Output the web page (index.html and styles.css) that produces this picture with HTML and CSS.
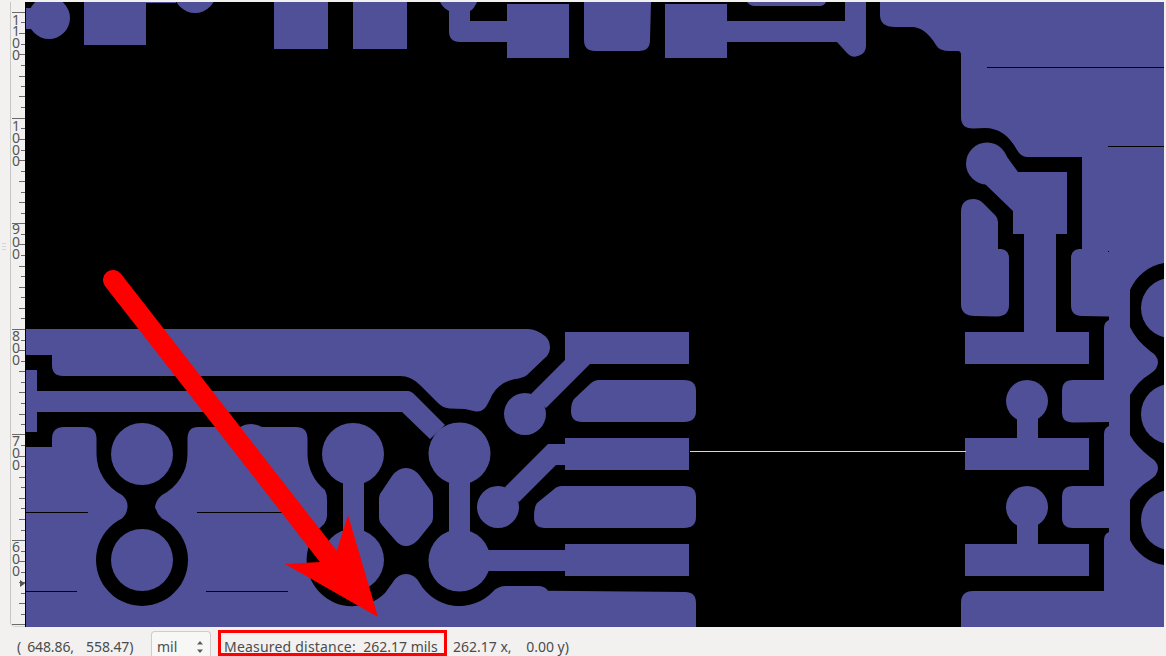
FILE: index.html
```html
<!DOCTYPE html>
<html lang="en">
<head>
<meta charset="utf-8">
<title>Gerber viewer</title>
<link rel="stylesheet" href="styles.css">
</head>
<body>
<div class="app">
  <div class="workspace">
    <div class="handle-strip"><span class="grip"></span></div>
    <div class="ruler">
      <svg class="ruler-svg" width="14" height="625" viewBox="11 2 14 625">
        <path class="ticks" d="M12 12.5h13M21 22.5h4M19 33.5h6M21 44.5h4M19 54.5h6M21 65.5h4M19 76.5h6M21 86.5h4M19 96.5h6M21 107.5h4M12 118.5h13M21 128.5h4M19 139.5h6M21 150.5h4M19 160.5h6M21 171.5h4M19 181.5h6M21 192.5h4M19 202.5h6M21 213.5h4M12 223.5h13M21 234.5h4M19 244.5h6M21 255.5h4M19 266.5h6M21 276.5h4M19 287.5h6M21 297.5h4M19 308.5h6M21 318.5h4M12 329.5h13M21 340.5h4M19 350.5h6M21 361.5h4M19 371.5h6M21 382.5h4M19 392.5h6M21 403.5h4M19 414.5h6M21 424.5h4M12 434.5h13M21 445.5h4M19 456.5h6M21 466.5h4M19 477.5h6M21 487.5h4M19 498.5h6M21 508.5h4M19 519.5h6M21 530.5h4M12 540.5h13M21 551.5h4M19 561.5h6M21 572.5h4M19 582.5h6M21 593.5h4M19 603.5h6M21 614.5h4M12 624.5h13"/>
        <text class="ruler-label" x="12 12 12 12" y="25 36 48 60">1100</text>
        <text class="ruler-label" x="12 12 12 12" y="131 143 155 166">1000</text>
        <text class="ruler-label" x="12 12 12" y="234 247 259">900</text>
        <text class="ruler-label" x="12 12 12" y="341 353 365">800</text>
        <text class="ruler-label" x="12 12 12" y="446 458 470">700</text>
        <text class="ruler-label" x="12 12 12" y="552 564 576">600</text>
        <path class="ruler-mark" d="M20 580l5 3.500-5 3.500z"/>
      </svg>
    </div>
    <svg class="board" width="1139" height="625" viewBox="25 2 1139 625">
      <g class="copper">
        <!-- top row -->
        <circle cx="49" cy="18" r="21"/>
        <rect x="26" y="8" width="8" height="21"/>
        <rect x="84" y="2" width="62" height="43"/>
        <rect x="146" y="2" width="30" height="1"/>
        <circle cx="195" cy="-8" r="21"/>
        <rect x="274" y="2" width="54" height="47"/>
        <rect x="353" y="2" width="54" height="47"/>
        <path d="M440 2H477Q474 9 470 11V21H507V4H569V58H507V42H460Q449 42 449 31V11Q443 8 440 2Z"/>
        <path d="M584 2H651L650 40Q650 51 639 51H595Q584 51 584 40Z"/>
        <path d="M665 4H727V21H845V2H866V45A11 11 0 0 1 847 53L837 42H727V58H665Z"/>
        <path d="M747 2H826Q824 6 820 6H755Q750 6 747 2Z"/>

        <!-- left planes -->
        <path d="M26 329H528Q536 329 545 336Q550 340 550 348Q550 352 547 356L527 375Q523 378 515 379Q500 382 492 395Q488 404 485 408Q481 412 476 411.500Q470 410 465 409L450 408.500Q443 408 438 403L420 385Q411 376 400 376H63Q52 376 52 365V355H26Z"/>
        <path d="M26 370H37V391H408Q411 391 415 395L445 425L430 439L402 412H37V432H26Z"/>
        <path d="M26 447H52V439Q52 427 64 427H85Q96 427 96.500 438V454A46 46 0 0 0 122 495Q128 500 127.500 507Q127 514 122 518.500A46 46 0 1 0 162 518.500Q157 514 155 507Q156 500 162 495A46 46 0 0 0 187.500 454V438Q188 427 198 427H240Q250 421 262 427H296Q307 427 307.500 438V454A46 46 0 0 0 325 490Q327 494 327 500V515Q327 522 322 526A46 46 0 1 0 385 593L393 582Q398 574 406 574Q414 574 419 582A46 46 0 0 0 493 591.500Q498 586 506 586H538Q545 586 548 590.700L685 592Q696 592 696 603V627H26Z"/>

        <!-- vias on left plane -->
        <circle cx="142" cy="454" r="31"/>
        <circle cx="142" cy="560" r="31"/>
        <circle cx="353" cy="454" r="31"/>
        <circle cx="353" cy="560" r="31"/>
        <rect x="343" y="454" width="21" height="106"/>
        <circle cx="459.500" cy="453.500" r="31"/>
        <circle cx="459.500" cy="560.500" r="31"/>
        <rect x="449" y="454" width="21" height="106"/>
        <rect x="470" y="550" width="95" height="21"/>
        <path d="M406 468Q414 468 420 476L431 491Q433 494 433 498V518Q433 522 430 525L418 540Q412 546 406 546Q400 546 395 540L382 525Q379 522 379 518V498Q379 494 382 491L392 476Q398 468 406 468Z"/>

        <!-- connector pads, left column -->
        <rect x="565" y="332" width="124" height="32"/>
        <rect x="565" y="438" width="124" height="32"/>
        <rect x="565" y="544" width="124" height="32"/>
        <circle cx="525" cy="414" r="21"/>
        <path d="M565 360L531 394L546 408L590 364H565Z"/>
        <circle cx="498" cy="507" r="21"/>
        <path d="M565 444H548L505 487L519 502L556 465H565Z"/>
        <path d="M574 399L590 384Q594 380 599 380H684Q696 380 696 391V411Q696 422 684 422H582Q571 422 571 411Q571 403 574 399Z"/>
        <path d="M537 503L553 490Q557 486 562 486H684Q696 486 696 497V517Q696 528 684 528H545Q534 528 534 517Q534 507 537 503Z"/>

        <!-- connector pads, right column -->
        <rect x="965" y="332" width="124" height="32"/>
        <rect x="965" y="438" width="124" height="32"/>
        <rect x="965" y="544" width="124" height="32"/>
        <circle cx="1027" cy="401" r="21"/>
        <rect x="1017" y="401" width="21" height="37"/>
        <circle cx="1027" cy="507" r="21"/>
        <rect x="1017" y="507" width="21" height="37"/>
        <circle cx="987" cy="163.500" r="21"/>
        <path d="M1002 150L1018 172H1067V234H1056V332H1024V234H1013V211L985 184Z"/>
        <path d="M961 212Q961 199 974 199Q980 199 985 205L995 215Q998 218 998 222V249H1001Q1009 250 1009 258V305Q1009 316 997 316.500L975 316Q961 316 961 304Z"/>

        <!-- right plane -->
        <path d="M880 2V15Q880 27 895 27H912Q925 27 936 45Q939 51 950 51H958Q961 51 961 55V117Q961 128.500 973 128.500L985 128Q1005 128 1017 150Q1021 157 1027 157H1082V249H1079Q1071 250 1071 258V305Q1071 316 1082 316L1109 316.500V320Q1104 322 1104 328V380H1073Q1062 380 1062 391V412Q1062 422.500 1073 422.500L1109 422V426Q1104 428 1104 434V486H1073Q1062 486 1062 497V518Q1062 528 1073 528H1109V532Q1104 534 1104 540V591H973Q961 591 961 603V627H1164V2Z"/>
      </g>
      <path class="clearance" d="M1164 263A45 45 0 0 0 1130 290V327Q1136 340 1150 351Q1158 356 1158 362Q1158 369 1150 374Q1138 381 1130 395V435Q1136 446 1150 457Q1158 462 1158 468Q1158 475 1150 480Q1138 487 1130 500V540A45 45 0 0 0 1164 565Z"/>
      <g class="copper">
        <circle cx="1171" cy="308" r="30"/>
        <circle cx="1171" cy="414" r="30"/>
        <circle cx="1171" cy="520" r="30"/>
      </g>
      <path class="hairline" d="M987 67.500H1164M1108 146.500H1164M1108 251.500H1109M26 512.500H88M197 512.500H288M26 591.500H77M206 591.500H288"/>
      <path class="measure" d="M690 451.500H966"/>
      <line class="arrow-shaft" x1="113" y1="280" x2="328" y2="556"/>
      <polygon class="arrow-head" points="378,617 348,515 337,550 320,562 285,564"/>
    </svg>
  </div>
  <div class="statusbar">
    <span class="coords">( 648.86,  558.47)</span>
    <div class="unit-select">
      <span>mil</span>
      <svg class="spinner" width="8" height="14" viewBox="0 0 8 14"><path d="M4 1L7 4.500H1ZM4 13L1 9.500H7Z"/></svg>
    </div>
    <span class="measured"><span class="measured-label">Measured distance:</span>  262.17 mils</span>
    <span class="delta">262.17 x,    0.00 y)</span>
  </div>
</div>
</body>
</html>
```
FILE: styles.css
```css
html, body {
  margin: 0;
  padding: 0;
  background: #f2f1f0;
}
.app {
  width: 1166px;
  height: 656px;
  display: flex;
  flex-direction: column;
  overflow: hidden;
  font-family: "Noto Sans", "Open Sans", sans-serif;
  color: #4c4c4c;
}
.workspace {
  display: flex;
  height: 625px;
  padding-top: 2px;
  flex: none;
}
.handle-strip {
  width: 10px;
  flex: none;
  display: flex;
  align-items: flex-start;
  justify-content: center;
}
.grip {
  width: 4px;
  height: 5px;
  margin-top: 241px;
  margin-right: 3px;
  border-top: 1px solid #d6d6d6;
  border-bottom: 1px solid #d6d6d6;
  background: linear-gradient(#f2f1f0 40%, #d6d6d6 40%, #d6d6d6 60%, #f2f1f0 60%);
}
.ruler {
  width: 14px;
  flex: none;
  border-left: 1px solid #c8c7c6;
  border-bottom: 1px solid #d4d3d2;
  border-bottom-left-radius: 5px;
  box-sizing: content-box;
  height: 624px;
  overflow: hidden;
}
.ruler-svg {
  display: block;
}
.ticks {
  stroke: #6a6a6a;
  stroke-width: 1;
  fill: none;
}
.ruler-label {
  font-family: "Noto Sans", "Open Sans", sans-serif;
  font-size: 14px;
  fill: #565656;
}
.ruler-mark {
  fill: #555;
}
.board {
  display: block;
  flex: none;
  background: #000;
}
.copper {
  fill: #505098;
}
.clearance {
  fill: #000;
}
.hairline {
  stroke: #000;
  stroke-width: 1;
  fill: none;
}
.measure {
  stroke: #d8d8d8;
  stroke-width: 1;
  fill: none;
}
.arrow-shaft {
  stroke: #f00;
  stroke-width: 20;
  stroke-linecap: round;
}
.arrow-head {
  fill: #f00;
}
.statusbar {
  height: 29px;
  flex: none;
  display: flex;
  align-items: flex-end;
  font-size: 14px;
  line-height: 20px;
  white-space: pre;
}
.coords {
  margin-left: 17px;
  margin-bottom: -1px;
  width: 134px;
  flex: none;
  letter-spacing: -0.1px;
  word-spacing: 2.5px;
}
.unit-select {
  width: 60px;
  height: 25px;
  flex: none;
  box-sizing: border-box;
  border: 1px solid #cfcdca;
  border-bottom: none;
  border-radius: 4px 4px 0 0;
  background: #f7f7f6;
  display: flex;
  align-items: flex-end;
  justify-content: space-between;
  padding: 0 6px 0 5px;
  overflow: hidden;
}
.unit-select span {
  margin-bottom: -1px;
}
.spinner {
  margin-bottom: 2px;
  fill: #5a5a5a;
}
.measured {
  margin-left: 7px;
  width: 229px;
  height: 26px;
  box-sizing: border-box;
  border: 3px solid #f00;
  padding-left: 3px;
  padding-top: 4px;
  flex: none;
  line-height: 20px;
  overflow: hidden;
}
.measured-label {
  letter-spacing: 0.2px;
}
.delta {
  margin-left: 6px;
  margin-bottom: -1px;
}
```
